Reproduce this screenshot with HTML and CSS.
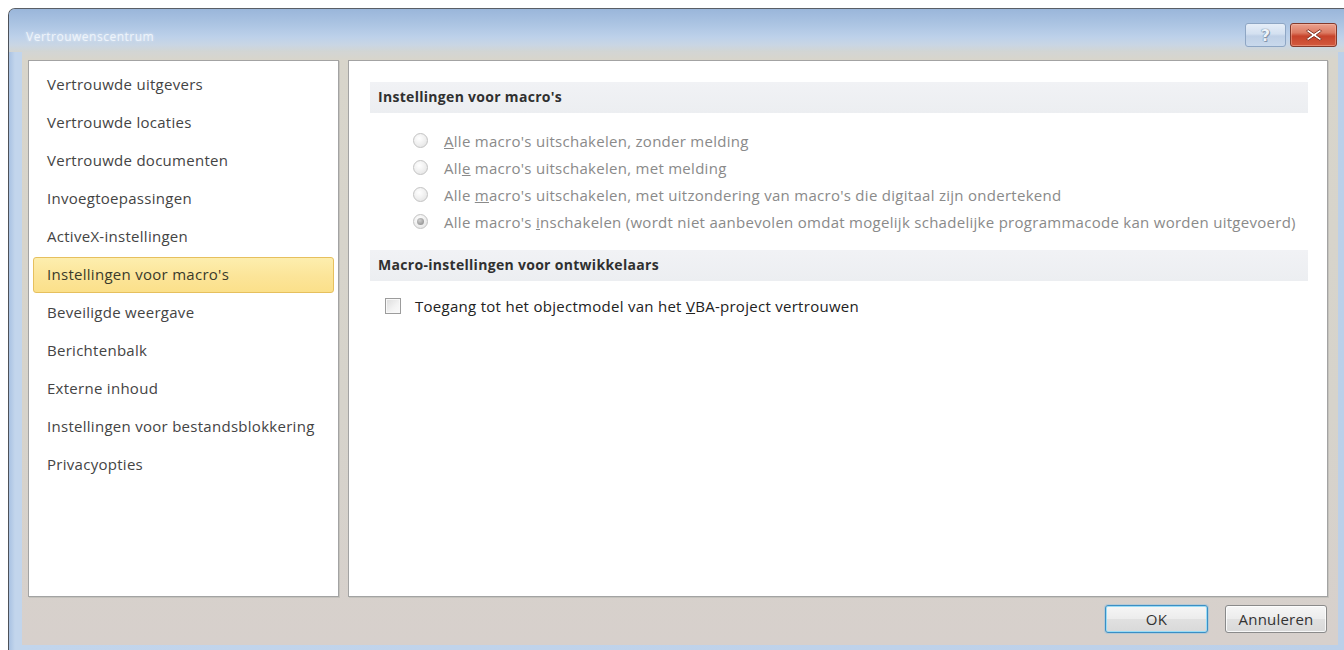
FILE: index.html
```html
<!DOCTYPE html>
<html lang="nl">
<head>
<meta charset="utf-8">
<title>Vertrouwenscentrum</title>
<link rel="stylesheet" href="styles.css">
</head>
<body>
<div class="window">
  <div class="titlebar">
    <span class="title">Vertrouwenscentrum</span>
    <div class="caption-buttons">
      <button class="cap help" aria-label="Help"><span>?</span></button>
      <button class="cap close" aria-label="Sluiten">
        <svg width="18" height="14" viewBox="0 0 18 14" aria-hidden="true">
          <path d="M3 1.5 L9 5.5 L15 1.5 L16.5 3.2 L11.2 7 L16.5 10.8 L15 12.5 L9 8.5 L3 12.5 L1.5 10.8 L6.8 7 L1.5 3.2 Z" fill="#fff" stroke="#7a2a1c" stroke-width="0.9" stroke-linejoin="round"/>
        </svg>
      </button>
    </div>
  </div>
  <div class="frame">
    <div class="client">
      <div class="panes">
        <ul class="nav">
          <li class="nav-item">Vertrouwde uitgevers</li>
          <li class="nav-item">Vertrouwde locaties</li>
          <li class="nav-item">Vertrouwde documenten</li>
          <li class="nav-item">Invoegtoepassingen</li>
          <li class="nav-item">ActiveX-instellingen</li>
          <li class="nav-item selected">Instellingen voor macro's</li>
          <li class="nav-item">Beveiligde weergave</li>
          <li class="nav-item">Berichtenbalk</li>
          <li class="nav-item">Externe inhoud</li>
          <li class="nav-item">Instellingen voor bestandsblokkering</li>
          <li class="nav-item">Privacyopties</li>
        </ul>
        <div class="content">
          <div class="section-head">Instellingen voor macro's</div>
          <div class="options">
            <div class="option"><span class="radio"></span><span><u>A</u>lle macro's uitschakelen, zonder melding</span></div>
            <div class="option"><span class="radio"></span><span>All<u>e</u> macro's uitschakelen, met melding</span></div>
            <div class="option"><span class="radio"></span><span>Alle <u>m</u>acro's uitschakelen, met uitzondering van macro's die digitaal zijn ondertekend</span></div>
            <div class="option"><span class="radio checked"></span><span>Alle macro's <u>i</u>nschakelen (wordt niet aanbevolen omdat mogelijk schadelijke programmacode kan worden uitgevoerd)</span></div>
          </div>
          <div class="section-head second">Macro-instellingen voor ontwikkelaars</div>
          <div class="check-row"><span class="checkbox"></span><span>Toegang tot het objectmodel van het <u>V</u>BA-project vertrouwen</span></div>
        </div>
      </div>
      <div class="actions">
        <button class="btn default">OK</button>
        <button class="btn">Annuleren</button>
      </div>
    </div>
  </div>
</div>
</body>
</html>
```
FILE: styles.css
```css
html, body {
  margin: 0;
  padding: 0;
  background: #ffffff;
  overflow: hidden;
  width: 1344px;
  height: 650px;
}

body {
  font-family: "Open Sans", "Noto Sans", "Liberation Sans", sans-serif;
  font-size: 15px;
  letter-spacing: 0.28px;
  color: #3c3c3c;
}

/* Dialog window with Aero-style frame */
.window {
  margin: 8px 0 0 8px;
  width: 1338px;
  height: 644px;
  box-sizing: border-box;
  border-left: 1px solid #4d5158;
  border-top: 1px solid #5a5f66;
  border-radius: 7px 0 0 0;
  background: linear-gradient(to right, #a9c2e2 0, #c2d5ec 6px, #bcd0e9 100%);
  display: flex;
  flex-direction: column;
  overflow: hidden;
}

.titlebar {
  height: 43px;
  flex: none;
  display: flex;
  justify-content: space-between;
  align-items: flex-start;
  padding: 0 9px 0 17px;
  background: linear-gradient(to bottom, #9ab6da 0, #aac3e2 14px, #bdd1ea 28px, #c9d6e4 36px, #d3d5d2 43px);
}

.title {
  margin-top: 21px;
  font-size: 12px;
  line-height: 14px;
  color: #eef4fb;
  text-shadow: 0 0 3px rgba(255, 255, 255, 0.7);
  letter-spacing: 0.5px;
}

.caption-buttons {
  margin-top: 14px;
  display: flex;
  gap: 4px;
}

.cap {
  height: 24px;
  padding: 0;
  border-radius: 3px;
  display: flex;
  align-items: center;
  justify-content: center;
  font-family: "DejaVu Sans", sans-serif;
}

.cap.help {
  width: 41px;
  border: 1px solid #8ea6c4;
  background: linear-gradient(to bottom, #e6eef8 0, #d3e0f0 45%, #bfd0e6 55%, #c9d9ec 100%);
  color: #eef3f9;
  font-size: 16px;
  font-weight: bold;
  text-shadow: 0 0 1px #6f819a, 0 0 1px #6f819a, 1px 1px 0 #8a9bb2;
}

.cap.close {
  width: 47px;
  border: 1px solid #833a2c;
  background: linear-gradient(to bottom, #eba28f 0, #dc7a62 40%, #c7432b 55%, #d35a3f 100%);
  box-shadow: inset 0 0 0 1px rgba(255, 200, 180, 0.4);
}

/* Blue frame around the client area */
.frame {
  flex: 1;
  padding: 0 8px 7px 13px;
  display: flex;
}

.client {
  flex: 1;
  padding: 8px 10px 0 6px;
  background: linear-gradient(to bottom, #d3d5d4 0, #d8d5cb 8px, #d6d3cb 60%, #d7d0cc 100%);
  display: flex;
  flex-direction: column;
}

.panes {
  height: 537px;
  display: flex;
  gap: 9px;
}

/* Category list */
.nav {
  width: 311px;
  box-sizing: border-box;
  margin: 0;
  padding: 4px 4px 0 4px;
  list-style: none;
  background: #ffffff;
  border: 1px solid #a3a3a3;
  box-shadow: 1px 1px 0 #c4c2bc;
}

.nav-item {
  height: 34px;
  line-height: 33px;
  margin: 2px 0;
  padding-left: 13px;
  border: 1px solid transparent;
  border-radius: 3px;
  color: #444444;
  white-space: nowrap;
}

.nav-item.selected {
  border-color: #e6c05e;
  background: linear-gradient(to bottom, #fdeeae 0, #fce59a 50%, #fbe08a 100%);
  color: #3a3a2a;
}

/* Settings page */
.content {
  flex: 1;
  box-sizing: border-box;
  padding: 21px 19px 0 21px;
  background: #ffffff;
  border: 1px solid #a3a3a3;
  box-shadow: 1px 1px 0 #c4c2bc;
}

.section-head {
  height: 31px;
  line-height: 30px;
  padding-left: 8px;
  background: linear-gradient(to bottom, #f1f2f5 0, #eceef1 100%);
  font-size: 14px;
  letter-spacing: 0.3px;
  font-weight: 700;
  color: #303030;
}

.section-head.second {
  margin-top: 15px;
}

.options {
  margin-top: 14px;
  padding-left: 43px;
}

.option {
  height: 27px;
  display: flex;
  align-items: center;
  color: #8a8a8a;
  white-space: nowrap;
}

.radio {
  width: 13px;
  height: 13px;
  flex: none;
  margin-right: 16px;
  border: 1px solid #c3c3c3;
  border-radius: 50%;
  background: radial-gradient(circle at 40% 35%, #ffffff 0, #f0f0f0 50%, #dedede 100%);
  position: relative;
}

.radio.checked::after {
  content: "";
  position: absolute;
  left: 3px;
  top: 3px;
  width: 7px;
  height: 7px;
  border-radius: 50%;
  background: radial-gradient(circle at 40% 35%, #cfcfcf 0, #9a9a9a 70%);
}

.check-row {
  margin-top: 12px;
  height: 26px;
  padding-left: 15px;
  display: flex;
  align-items: center;
  color: #222222;
  white-space: nowrap;
}

.checkbox {
  width: 14px;
  height: 14px;
  flex: none;
  margin-right: 14px;
  border: 1px solid #9c9c9c;
  background: linear-gradient(135deg, #dcdcdc 0, #f3f3f3 60%, #fafafa 100%);
  box-shadow: inset 0 0 0 1px #f8f8f8;
}

/* Dialog buttons */
.actions {
  margin-top: 8px;
  margin-right: 1px;
  display: flex;
  justify-content: flex-end;
  gap: 17px;
}

.btn {
  height: 28px;
  font-family: inherit;
  font-size: 15px;
  letter-spacing: 0.2px;
  color: #333333;
  border-radius: 3px;
  border: 1px solid #8a8a8a;
  background: linear-gradient(to bottom, #f6f6f6 0, #ececec 50%, #e0e0e0 51%, #d9d9d9 100%);
  box-shadow: inset 0 0 0 1px rgba(255, 255, 255, 0.8);
  padding: 0;
}

.btn.default {
  width: 103px;
  border-color: #3b8ec4;
  box-shadow: inset 0 0 0 1px #9adcf6, 0 0 0 1px rgba(120, 190, 230, 0.35);
}

.btn:not(.default) {
  width: 102px;
}
```
